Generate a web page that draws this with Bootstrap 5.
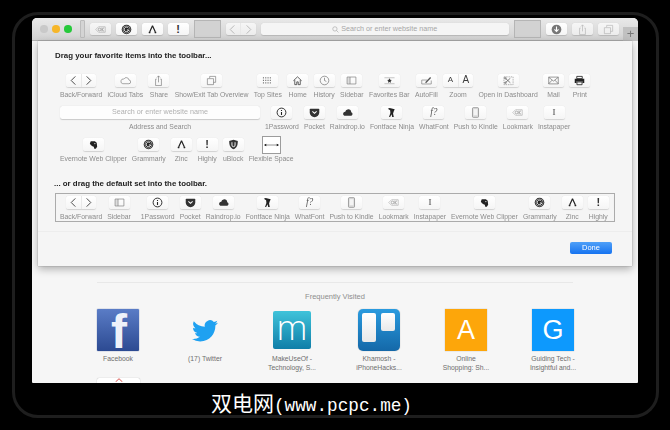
<!DOCTYPE html>
<html lang="en">
<head>
<meta charset="utf-8">
<title>Safari toolbar customisation</title>
<link href="https://cdn.jsdelivr.net/npm/bootstrap@5.3.0/dist/css/bootstrap.min.css" rel="stylesheet">
<style>
html,body{width:670px;height:430px;overflow:hidden;background:#000;margin:0}
body{font-family:"Liberation Sans",Arial,sans-serif}
.bezel{width:647px;height:406px;margin:12px 0 0 12px;border:3px solid #1e1e1e;border-radius:26px}
.win{position:relative;width:606px;height:365px;margin:3px 0 0 17px;background:#f6f6f6;border-radius:5px 5px 1px 1px;overflow:hidden;filter:blur(.3px)}
.bar{height:23px;padding:0 19px 0 8px;background:linear-gradient(#e9e9e9,#d2d2d2);border-bottom:1px solid #b4b4b4;gap:5px}
.dot{width:7.5px;height:7.5px;border-radius:50%}
.dot-off{background:#c9c9c9}.dot-y{background:#f6b629}.dot-g{background:#26c93b}
.lights{gap:4.5px;margin-right:3px}
.handle{width:5px;height:18px;background:#d4d4d4;border:1px solid #bcbcbc;border-radius:1px}
.slot{width:27px;height:18px;background:#d2d2d2;border:1px solid #b5b5b5}
.bbtn{width:21px;height:12.5px;background:linear-gradient(#fff,#f5f5f5);border-radius:2.5px;box-shadow:0 .5px 1px rgba(0,0,0,.15);color:#3c3c3c}
.bbtn svg{width:11px;height:11px}
.bbtn.dim{color:#b5b5b5;background:linear-gradient(#f6f6f6,#ececec)}
.bbtn.wide{width:30px}
.bbtn .seg{flex:1;text-align:center;height:100%;display:flex;align-items:center;justify-content:center}
.bbtn .seg+.seg{border-left:1px solid #e8e8e8}
.urlbar{flex:1;height:12.5px;background:#f5f5f5;border-radius:2.5px;box-shadow:0 .5px 1px rgba(0,0,0,.15);color:#a6a6a6;font-size:7.2px;gap:2px}
.urlbar svg{width:7px;height:7px}
.addtab{position:absolute;right:0;top:9px;width:15px;height:14px;background:#c1c1c1;color:#777;font-size:13px;line-height:14px;text-align:center}
.sheet{position:absolute;left:6px;top:23px;width:594px;height:225px;background:#f5f5f5;box-shadow:0 0 1px rgba(0,0,0,.45),0 3px 8px rgba(0,0,0,.3);padding:9px 0 0 17px}
.drag-title{font-size:7.9px;line-height:12px;font-weight:700;color:#222;margin:0}
.rowset{gap:5px;padding-left:5px;margin-top:12px;height:25px}
.rowset.first-set{gap:5.3px}
.rowset+.rowset{margin-top:7px}
.tbtn-label{font-size:6.85px;line-height:8px;margin-top:4px;color:#8b8b8b;white-space:nowrap}
.addr{width:200px;height:12.5px;background:#fdfdfd;border-radius:2.5px;box-shadow:0 .5px 1px rgba(0,0,0,.18);color:#b0b0b0;font-size:7.2px}
.flexi{width:19px;height:18px;margin:-2px 0 -3px;background:#fff;border:1px solid #9c9c9c;color:#333}
.flexi svg{width:15px;height:6px}
.default-title{margin:15px 0 0 -1px}
.defaults{width:560px;height:29px;border:1px solid #ababab;overflow:hidden;padding:2px 0 0 4px;gap:5px;margin-top:3px}
.extra-gap{margin-left:5px}
.sheet-foot{position:absolute;left:0;right:0;top:190px;border-top:1px solid #ededed;height:35px;padding:10px 20px 0 0}
.done{width:42px;height:12px;padding:0;font-size:7.5px;line-height:12px;border-radius:2px;border:0;color:#fff;background:linear-gradient(#4fa0f8,#1673f0)}
.done:hover{color:#fff}
.page{padding-top:241px;width:606px}
.rule{margin:0 65px 0 65px;border-top:1px solid #e8e8e8;height:10px}
.fv-title{font-size:7.5px;line-height:9px;color:#8e8e8e;text-align:center;margin-bottom:8px}
.tiles{padding-left:42.5px}
.tile{width:87px}
.tile-img{width:42px;height:42px}
.tile-name{font-size:6.8px;line-height:8.5px;color:#6e6e6e;text-align:center;margin-top:4px;white-space:nowrap}
.fb{background:linear-gradient(#5a7cc6,#2c4a92);font-size:48px;font-weight:700;color:#eef2fa;line-height:38px;padding:4px 0 0 14px;overflow:hidden;border-radius:1px;box-shadow:0 0 1px #1d3a80}
.tw-svg{width:28px;height:26px;fill:#1fa1f1}
.muo{width:38px;height:38px;border-radius:2px;background:linear-gradient(#3fc3da,#0f7ea8);color:#fff;font-size:35px;line-height:30px;font-family:"Open Sans",sans-serif;font-weight:300;padding-bottom:6px}
.trello{background:linear-gradient(#2a9bdf,#1468a8);border-radius:5px;padding:4px;gap:5px;box-shadow:0 0 1px rgba(0,0,0,.4)}
.trello-a{width:14px;height:29px;background:linear-gradient(#fff,#e9e9e9);border-radius:2px}
.trello-b{width:14px;height:18px;background:linear-gradient(#fff,#e9e9e9);border-radius:2px}
.lettered{color:#fff;font-size:27px;font-weight:400;box-shadow:0 0 1px rgba(0,0,0,.3)}
.lt-a{background:#fda60a}.lt-g{background:#0d99fd}
.next-row{margin:6px 0 0 65px}
.peek{width:43px;height:20px;background:#fff;border-radius:2px;box-shadow:0 0 1px rgba(0,0,0,.35);color:#d9534f}
.peek svg{width:8px;height:4px;display:block;margin:0 auto}
.caption{margin:6px 0 0 196px;color:#fff;font-family:"Noto Sans CJK SC","Liberation Mono",monospace;font-size:21px;line-height:26px;white-space:nowrap}
.caption span{font-family:"Liberation Mono",monospace;font-size:17.7px}
.txt-a{font-size:8px;line-height:1}
.txt-b{font-size:10px;line-height:1}
.txt-f{font-family:"Liberation Serif",serif;font-style:italic;font-size:9.5px;color:#555}
.txt-i{font-family:"Liberation Serif",serif;font-size:9px;color:#444}
.txt-x{font-weight:700;font-size:11px;line-height:1;color:#333}
</style>
</head>
<body>
<svg class="d-none" xmlns="http://www.w3.org/2000/svg">
<symbol id="cl" viewBox="0 0 12 12"><path d="M8 1.5 3.5 6 8 10.5" fill="none" stroke="currentColor" stroke-width="1"/></symbol>
<symbol id="cr" viewBox="0 0 12 12"><path d="M4 1.5 8.5 6 4 10.5" fill="none" stroke="currentColor" stroke-width="1"/></symbol>
<symbol id="cloud" viewBox="0 0 12 12"><path d="M3 9.500h6.500a2 2 0 0 0 .3-4A3 3 0 0 0 4.200 4.400 2.600 2.600 0 0 0 3 9.500z" fill="none" stroke="#777" stroke-width=".7"/></symbol>
<symbol id="share" viewBox="0 0 12 12"><path d="M4 4.500H2.800v7h6.400v-7H8M6 8V1M4.300 2.700 6 1l1.700 1.700" fill="none" stroke="#777" stroke-width=".7"/></symbol>
<symbol id="tabs" viewBox="0 0 12 12"><path d="M4 3.500V1.500h6.500V8H8.200M1.500 4h6.700v6.500H1.500z" fill="none" stroke="#777" stroke-width=".7"/></symbol>
<symbol id="grid" viewBox="0 0 12 12"><g fill="#666"><rect x="1" y="2.500" width="1.200" height="1.200"/><rect x="3.500" y="2.500" width="1.200" height="1.200"/><rect x="6" y="2.500" width="1.200" height="1.200"/><rect x="8.500" y="2.500" width="1.200" height="1.200"/><rect x="1" y="5.200" width="1.200" height="1.200"/><rect x="3.500" y="5.200" width="1.200" height="1.200"/><rect x="6" y="5.200" width="1.200" height="1.200"/><rect x="8.500" y="5.200" width="1.200" height="1.200"/><rect x="1" y="8" width="1.200" height="1.200"/><rect x="3.500" y="8" width="1.200" height="1.200"/><rect x="6" y="8" width="1.200" height="1.200"/><rect x="8.500" y="8" width="1.200" height="1.200"/></g></symbol>
<symbol id="home" viewBox="0 0 12 12"><path d="M1.500 6.300 6 2l4.500 4.300M3 5.500v5h2.200V7.500h1.600v3H9v-5" fill="none" stroke="#444" stroke-width=".9"/></symbol>
<symbol id="clock" viewBox="0 0 12 12"><circle cx="6" cy="6" r="4.700" fill="none" stroke="#666" stroke-width=".7"/><path d="M6 3v3l2 1" fill="none" stroke="#666" stroke-width=".7"/></symbol>
<symbol id="side" viewBox="0 0 12 12"><path d="M1.500 2.500h2.700v7H1.500z" fill="#ddd"/><path d="M1.200 2.200h9.600v7.600H1.200zM4.400 2.200v7.600" fill="none" stroke="#777" stroke-width=".7"/></symbol>
<symbol id="fav" viewBox="0 0 12 12"><path d="M.5 3h11M.5 9.500h11" stroke="#999" stroke-width=".6"/><path d="m6 3.500.8 1.700 1.800.2-1.300 1.200.3 1.800L6 7.500l-1.600.9.3-1.800-1.300-1.200 1.800-.2z" fill="#333"/></symbol>
<symbol id="fill" viewBox="0 0 12 12"><path d="M.8 5.500h6M.8 5.500v4.300h10.400V6" fill="none" stroke="#777" stroke-width=".7"/><path d="M4.500 8 10 2.200l1 1L5.500 9z" fill="#555"/></symbol>
<symbol id="dash" viewBox="0 0 12 12"><path d="M1 2h10v8.500H1z" fill="none" stroke="#888" stroke-width=".7" stroke-dasharray="1.500 1"/><path d="M2.500 3.500 8 8.500M2.500 8.500 8 3.500" stroke="#555" stroke-width=".8"/><circle cx="2.600" cy="3.500" r="1" fill="none" stroke="#555" stroke-width=".6"/><circle cx="2.600" cy="8.500" r="1" fill="none" stroke="#555" stroke-width=".6"/></symbol>
<symbol id="mail" viewBox="0 0 12 12"><path d="M.8 2.300h10.400v7.400H.8zM.8 2.500 6 6.600l5.200-4.100M.8 9.500l3.800-4M11.200 9.500l-3.800-4" fill="none" stroke="#666" stroke-width=".7"/></symbol>
<symbol id="print" viewBox="0 0 12 12"><path d="M3 1.500h6V4H3z" fill="none" stroke="#222" stroke-width=".9"/><path d="M.8 4h10.400v4.800H9.300V7H2.700v1.800H.8z" fill="#222"/><path d="M3.200 7.600h5.600v3H3.200z" fill="none" stroke="#222" stroke-width=".9"/></symbol>
<symbol id="onep" viewBox="0 0 12 12"><circle cx="6" cy="6" r="4.800" fill="none" stroke="#222" stroke-width="1"/><path d="M6 3.200v1.200M6 5.400v3.400" stroke="#222" stroke-width="1.200"/></symbol>
<symbol id="pocket" viewBox="0 0 12 12"><path d="M1.500 2h9a.7.7 0 0 1 .7.7V6a5.200 5.200 0 0 1-10.400 0V2.700A.7.7 0 0 1 1.500 2z" fill="#333"/><path d="M3.700 4.800 6 7l2.300-2.200" fill="none" stroke="#fff" stroke-width="1.100"/></symbol>
<symbol id="drop" viewBox="0 0 12 12"><path d="M2.500 9.500h7a2 2 0 0 0 .6-3.900A3 3 0 0 0 6 2.800a2.900 2.900 0 0 0-2.400 2.500 2.200 2.200 0 0 0-1.100 4.200z" fill="#333"/></symbol>
<symbol id="ninja" viewBox="0 0 12 12"><path d="M4 1 9.500 2.500 8.500 4.500 7.700 7 8.500 11H6.800L6 8 4.500 11H3.300L4.800 6.500 4.500 3.500 2 2z" fill="#222"/></symbol>
<symbol id="kindle" viewBox="0 0 12 12"><rect x="2.700" y=".7" width="6.600" height="10.600" rx="1" fill="#ddd" stroke="#777" stroke-width=".7"/><path d="M4 2.400h4v6.400H4z" fill="#f4f4f4"/></symbol>
<symbol id="look" viewBox="0 0 14 12"><path d="M13 2.500H4.500L1 6l3.500 3.500H13z" fill="none" stroke="#aaa" stroke-width=".8"/><circle cx="5.800" cy="6" r="1.700" fill="none" stroke="#888" stroke-width=".8"/><path d="M8.800 3.700v4.600M11.500 3.700 8.800 6l2.700 2.300" fill="none" stroke="#888" stroke-width=".8"/></symbol>
<symbol id="ever" viewBox="0 0 12 12"><path d="M3 2.500h4.500L9.500 4 10 8.500 8.500 10.500H6.800L6.300 8.500 4.800 8 3 6.500 2 5z" fill="#222"/><circle cx="7.500" cy="5" r=".6" fill="#fff"/></symbol>
<symbol id="gram" viewBox="0 0 12 12"><circle cx="6" cy="6" r="5.200" fill="#222"/><circle cx="6" cy="6" r="4" fill="none" stroke="#fff" stroke-width=".5"/><path d="M8 4.400A2.500 2.500 0 1 0 8.400 6.500H6.400" fill="none" stroke="#fff" stroke-width="1"/></symbol>
<symbol id="zinc" viewBox="0 0 12 12"><path d="M6 1.800 3 8.500M6 1.800 9 8.500" stroke="#222" stroke-width="1.300" fill="none"/><circle cx="2.800" cy="9.200" r="1" fill="#222"/><circle cx="9.200" cy="9.200" r="1" fill="#222"/></symbol>
<symbol id="ublock" viewBox="0 0 12 12"><path d="M6 .7 10.700 2.300C10.700 7 9.500 9.800 6 11.300 2.500 9.800 1.300 7 1.300 2.300z" fill="#333"/><path d="M4.300 3.500v3.200a1.700 1.700 0 0 0 3.400 0V3.500" fill="none" stroke="#fff" stroke-width="1"/></symbol>
<symbol id="dl" viewBox="0 0 12 12"><circle cx="6" cy="6" r="5.300" fill="#777"/><path d="M6 2.800v5M3.800 5.800 6 8.200l2.200-2.400" fill="none" stroke="#fff" stroke-width="1.200"/></symbol>
<symbol id="mag" viewBox="0 0 12 12"><circle cx="5" cy="5" r="3.700" fill="none" stroke="currentColor" stroke-width="1.100"/><path d="M7.800 7.800 11 11" stroke="currentColor" stroke-width="1.100"/></symbol>
<symbol id="arrows" viewBox="0 0 20 8"><path d="M1 4h18" stroke="#333" stroke-width=".7"/><path d="M0 4 3 2.300v3.400zM20 4l-3-1.700v3.400z" fill="#111"/></symbol>
</svg>

<div class="bezel">
  <div class="win">
    <div class="bar d-flex align-items-center">
      <div class="lights d-flex align-items-center"><span class="dot dot-off"></span><span class="dot dot-y"></span><span class="dot dot-g"></span></div>
      <span class="handle"></span>
      <span class="bbtn dim d-flex align-items-center justify-content-center"><svg><use href="#look"/></svg></span>
      <span class="bbtn d-flex align-items-center justify-content-center"><svg><use href="#gram"/></svg></span>
      <span class="bbtn d-flex align-items-center justify-content-center"><svg><use href="#zinc"/></svg></span>
      <span class="bbtn d-flex align-items-center justify-content-center txt-x">!</span>
      <span class="slot"></span>
      <span class="bbtn wide dim d-flex"><span class="seg"><svg><use href="#cl"/></svg></span><span class="seg"><svg><use href="#cr"/></svg></span></span>
      <span class="urlbar d-flex align-items-center justify-content-center"><svg><use href="#mag"/></svg>Search or enter website name</span>
      <span class="slot"></span>
      <span class="bbtn d-flex align-items-center justify-content-center"><svg><use href="#dl"/></svg></span>
      <span class="bbtn dim d-flex align-items-center justify-content-center"><svg class="opacity-50"><use href="#share"/></svg></span>
      <span class="bbtn dim d-flex align-items-center justify-content-center"><svg class="opacity-50"><use href="#tabs"/></svg></span>
    </div>
    <span class="addtab">+</span>

    <div class="page">
      <div class="rule"></div>
      <div class="fv-title">Frequently Visited</div>
      <div class="tiles d-flex">
        <div class="tile d-flex flex-column align-items-center"><div class="tile-img fb">f</div><div class="tile-name">Facebook</div></div>
        <div class="tile d-flex flex-column align-items-center"><div class="tile-img d-flex align-items-center justify-content-center"><svg class="tw-svg" viewBox="0 0 16 16"><path d="M5.026 15c6.038 0 9.341-5.003 9.341-9.334 0-.14 0-.282-.006-.422A6.685 6.685 0 0 0 16 3.542a6.658 6.658 0 0 1-1.889.518 3.301 3.301 0 0 0 1.447-1.817 6.533 6.533 0 0 1-2.087.793A3.286 3.286 0 0 0 7.875 6.03a9.325 9.325 0 0 1-6.767-3.429 3.289 3.289 0 0 0 1.018 4.382A3.323 3.323 0 0 1 .64 6.575v.045a3.288 3.288 0 0 0 2.632 3.218 3.203 3.203 0 0 1-.865.115 3.23 3.23 0 0 1-.614-.057 3.283 3.283 0 0 0 3.067 2.277A6.588 6.588 0 0 1 .78 13.58a6.32 6.32 0 0 1-.78-.045A9.344 9.344 0 0 0 5.026 15z"/></svg></div><div class="tile-name">(17) Twitter</div></div>
        <div class="tile d-flex flex-column align-items-center"><div class="tile-img d-flex align-items-center justify-content-center"><div class="muo d-flex align-items-center justify-content-center">m</div></div><div class="tile-name">MakeUseOf -<br>Technology, S...</div></div>
        <div class="tile d-flex flex-column align-items-center"><div class="tile-img trello d-flex"><span class="trello-a"></span><span class="trello-b"></span></div><div class="tile-name">Khamosh -<br>iPhoneHacks...</div></div>
        <div class="tile d-flex flex-column align-items-center"><div class="tile-img lettered lt-a d-flex align-items-center justify-content-center">A</div><div class="tile-name">Online<br>Shopping: Sh...</div></div>
        <div class="tile d-flex flex-column align-items-center"><div class="tile-img lettered lt-g d-flex align-items-center justify-content-center">G</div><div class="tile-name">Guiding Tech -<br>Insightful and...</div></div>
      </div>
      <div class="next-row"><div class="peek"><svg viewBox="0 0 8 4"><path d="M.5 4 4 .7 7.500 4" fill="none" stroke="currentColor"/></svg></div></div>
    </div>

    <div class="sheet">
      <p class="drag-title">Drag your favorite items into the toolbar...</p>

      <div class="rowset first-set d-flex">
        <div class="d-flex flex-column align-items-center"><span class="bbtn wide d-flex"><span class="seg"><svg><use href="#cl"/></svg></span><span class="seg"><svg><use href="#cr"/></svg></span></span><span class="tbtn-label">Back/Forward</span></div>
        <div class="d-flex flex-column align-items-center"><span class="bbtn d-flex align-items-center justify-content-center"><svg><use href="#cloud"/></svg></span><span class="tbtn-label">iCloud Tabs</span></div>
        <div class="d-flex flex-column align-items-center"><span class="bbtn d-flex align-items-center justify-content-center"><svg><use href="#share"/></svg></span><span class="tbtn-label">Share</span></div>
        <div class="d-flex flex-column align-items-center"><span class="bbtn d-flex align-items-center justify-content-center"><svg><use href="#tabs"/></svg></span><span class="tbtn-label">Show/Exit Tab Overview</span></div>
        <div class="d-flex flex-column align-items-center"><span class="bbtn d-flex align-items-center justify-content-center"><svg><use href="#grid"/></svg></span><span class="tbtn-label">Top Sites</span></div>
        <div class="d-flex flex-column align-items-center"><span class="bbtn d-flex align-items-center justify-content-center"><svg><use href="#home"/></svg></span><span class="tbtn-label">Home</span></div>
        <div class="d-flex flex-column align-items-center"><span class="bbtn d-flex align-items-center justify-content-center"><svg><use href="#clock"/></svg></span><span class="tbtn-label">History</span></div>
        <div class="d-flex flex-column align-items-center"><span class="bbtn d-flex align-items-center justify-content-center"><svg><use href="#side"/></svg></span><span class="tbtn-label">Sidebar</span></div>
        <div class="d-flex flex-column align-items-center"><span class="bbtn d-flex align-items-center justify-content-center"><svg><use href="#fav"/></svg></span><span class="tbtn-label">Favorites Bar</span></div>
        <div class="d-flex flex-column align-items-center"><span class="bbtn d-flex align-items-center justify-content-center"><svg><use href="#fill"/></svg></span><span class="tbtn-label">AutoFill</span></div>
        <div class="d-flex flex-column align-items-center"><span class="bbtn wide d-flex"><span class="seg txt-a">A</span><span class="seg txt-b">A</span></span><span class="tbtn-label">Zoom</span></div>
        <div class="d-flex flex-column align-items-center"><span class="bbtn d-flex align-items-center justify-content-center"><svg><use href="#dash"/></svg></span><span class="tbtn-label">Open in Dashboard</span></div>
        <div class="d-flex flex-column align-items-center"><span class="bbtn d-flex align-items-center justify-content-center"><svg><use href="#mail"/></svg></span><span class="tbtn-label">Mail</span></div>
        <div class="d-flex flex-column align-items-center"><span class="bbtn d-flex align-items-center justify-content-center"><svg><use href="#print"/></svg></span><span class="tbtn-label">Print</span></div>
      </div>

      <div class="rowset d-flex">
        <div class="d-flex flex-column align-items-center"><span class="addr d-flex align-items-center justify-content-center">Search or enter website name</span><span class="tbtn-label">Address and Search</span></div>
        <div class="d-flex flex-column align-items-center"><span class="bbtn d-flex align-items-center justify-content-center"><svg><use href="#onep"/></svg></span><span class="tbtn-label">1Password</span></div>
        <div class="d-flex flex-column align-items-center"><span class="bbtn d-flex align-items-center justify-content-center"><svg><use href="#pocket"/></svg></span><span class="tbtn-label">Pocket</span></div>
        <div class="d-flex flex-column align-items-center"><span class="bbtn d-flex align-items-center justify-content-center"><svg><use href="#drop"/></svg></span><span class="tbtn-label">Raindrop.io</span></div>
        <div class="d-flex flex-column align-items-center"><span class="bbtn d-flex align-items-center justify-content-center"><svg><use href="#ninja"/></svg></span><span class="tbtn-label">Fontface Ninja</span></div>
        <div class="d-flex flex-column align-items-center"><span class="bbtn d-flex align-items-center justify-content-center txt-f">f?</span><span class="tbtn-label">WhatFont</span></div>
        <div class="d-flex flex-column align-items-center"><span class="bbtn d-flex align-items-center justify-content-center"><svg><use href="#kindle"/></svg></span><span class="tbtn-label">Push to Kindle</span></div>
        <div class="d-flex flex-column align-items-center"><span class="bbtn d-flex align-items-center justify-content-center"><svg><use href="#look"/></svg></span><span class="tbtn-label">Lookmark</span></div>
        <div class="d-flex flex-column align-items-center"><span class="bbtn d-flex align-items-center justify-content-center txt-i">I</span><span class="tbtn-label">Instapaper</span></div>
      </div>

      <div class="rowset d-flex">
        <div class="d-flex flex-column align-items-center"><span class="bbtn d-flex align-items-center justify-content-center"><svg><use href="#ever"/></svg></span><span class="tbtn-label">Evernote Web Clipper</span></div>
        <div class="d-flex flex-column align-items-center"><span class="bbtn d-flex align-items-center justify-content-center"><svg><use href="#gram"/></svg></span><span class="tbtn-label">Grammarly</span></div>
        <div class="d-flex flex-column align-items-center"><span class="bbtn d-flex align-items-center justify-content-center"><svg><use href="#zinc"/></svg></span><span class="tbtn-label">Zinc</span></div>
        <div class="d-flex flex-column align-items-center"><span class="bbtn d-flex align-items-center justify-content-center txt-x">!</span><span class="tbtn-label">Highly</span></div>
        <div class="d-flex flex-column align-items-center"><span class="bbtn d-flex align-items-center justify-content-center"><svg><use href="#ublock"/></svg></span><span class="tbtn-label">uBlock</span></div>
        <div class="d-flex flex-column align-items-center"><span class="flexi d-flex align-items-center justify-content-center"><svg><use href="#arrows"/></svg></span><span class="tbtn-label">Flexible Space</span></div>
      </div>

      <p class="drag-title default-title">... or drag the default set into the toolbar.</p>
      <div class="defaults d-flex">
        <div class="d-flex flex-column align-items-center flex-shrink-0"><span class="bbtn wide d-flex"><span class="seg"><svg><use href="#cl"/></svg></span><span class="seg"><svg><use href="#cr"/></svg></span></span><span class="tbtn-label">Back/Forward</span></div>
        <div class="d-flex flex-column align-items-center flex-shrink-0"><span class="bbtn d-flex align-items-center justify-content-center"><svg><use href="#side"/></svg></span><span class="tbtn-label">Sidebar</span></div>
        <div class="d-flex flex-column align-items-center flex-shrink-0 extra-gap"><span class="bbtn d-flex align-items-center justify-content-center"><svg><use href="#onep"/></svg></span><span class="tbtn-label">1Password</span></div>
        <div class="d-flex flex-column align-items-center flex-shrink-0"><span class="bbtn d-flex align-items-center justify-content-center"><svg><use href="#pocket"/></svg></span><span class="tbtn-label">Pocket</span></div>
        <div class="d-flex flex-column align-items-center flex-shrink-0"><span class="bbtn d-flex align-items-center justify-content-center"><svg><use href="#drop"/></svg></span><span class="tbtn-label">Raindrop.io</span></div>
        <div class="d-flex flex-column align-items-center flex-shrink-0"><span class="bbtn d-flex align-items-center justify-content-center"><svg><use href="#ninja"/></svg></span><span class="tbtn-label">Fontface Ninja</span></div>
        <div class="d-flex flex-column align-items-center flex-shrink-0"><span class="bbtn d-flex align-items-center justify-content-center txt-f">f?</span><span class="tbtn-label">WhatFont</span></div>
        <div class="d-flex flex-column align-items-center flex-shrink-0"><span class="bbtn d-flex align-items-center justify-content-center"><svg><use href="#kindle"/></svg></span><span class="tbtn-label">Push to Kindle</span></div>
        <div class="d-flex flex-column align-items-center flex-shrink-0"><span class="bbtn d-flex align-items-center justify-content-center"><svg><use href="#look"/></svg></span><span class="tbtn-label">Lookmark</span></div>
        <div class="d-flex flex-column align-items-center flex-shrink-0"><span class="bbtn d-flex align-items-center justify-content-center txt-i">I</span><span class="tbtn-label">Instapaper</span></div>
        <div class="d-flex flex-column align-items-center flex-shrink-0"><span class="bbtn d-flex align-items-center justify-content-center"><svg><use href="#ever"/></svg></span><span class="tbtn-label">Evernote Web Clipper</span></div>
        <div class="d-flex flex-column align-items-center flex-shrink-0"><span class="bbtn d-flex align-items-center justify-content-center"><svg><use href="#gram"/></svg></span><span class="tbtn-label">Grammarly</span></div>
        <div class="d-flex flex-column align-items-center flex-shrink-0"><span class="bbtn d-flex align-items-center justify-content-center"><svg><use href="#zinc"/></svg></span><span class="tbtn-label">Zinc</span></div>
        <div class="d-flex flex-column align-items-center flex-shrink-0"><span class="bbtn d-flex align-items-center justify-content-center txt-x">!</span><span class="tbtn-label">Highly</span></div>
        <div class="d-flex flex-column align-items-center flex-shrink-0"><span class="bbtn d-flex align-items-center justify-content-center"><svg><use href="#ublock"/></svg></span><span class="tbtn-label">uBlock</span></div>
      </div>

      <div class="sheet-foot d-flex justify-content-end"><button type="button" class="btn done">Done</button></div>
    </div>
  </div>
  <div class="caption">双电网<span>(www.pcpc.me)</span></div>
</div>
<script src="https://cdn.jsdelivr.net/npm/bootstrap@5.3.0/dist/js/bootstrap.bundle.min.js"></script>
</body>
</html>
